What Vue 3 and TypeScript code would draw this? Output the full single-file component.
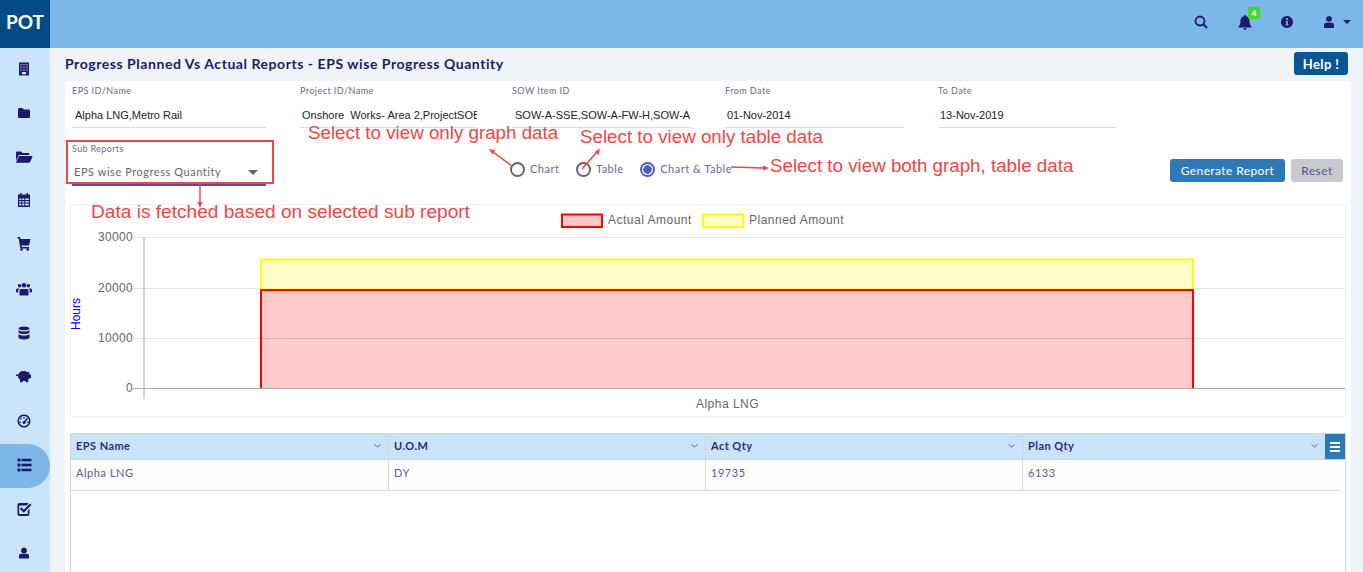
<script setup lang="ts">
const navIcons: string[] = [
  'M4 1.500h10v13H4zM5.500 3v1.200h1.200V3zM8.400 3v1.200h1.200V3zM11.300 3v1.200h1.200V3zM5.500 5.600v1.200h1.200V5.600zM8.400 5.600v1.200h1.200V5.600zM11.300 5.600v1.200h1.200V5.600zM5.500 8.200v1.200h1.200V8.200zM8.400 8.200v1.200h1.200V8.200zM11.300 8.200v1.200h1.200V8.200zM7 11v2.200h4V11z',
  'M3 4.200Q3 3 4.200 3h3L9 4.600h4.800Q15 4.600 15 5.800v6Q15 13 13.800 13H4.200Q3 13 3 11.800z',
  'M1 3.500Q1 2.500 2 2.500h4l1.700 1.600h5.600q1 0 1 1v1H4.600Q3.800 6.100 3.400 7L1 11.500zM4.600 7.100H17q.8 0 .4.900l-2.300 5q-.4.700-1.200.7H1.600q-.8 0-.4-.8l2.400-5q.4-.8 1-.8z',
  'M5 0h1.600v1.600h4.800V0H13v1.600h2V14H3V1.600h2zM4.300 5.500V7h2V5.500zM7.300 5.500V7h2V5.500zM10.300 5.500V7h3.400V5.500zM4.300 8v1.500h2V8zM7.300 8v1.500h2V8zM10.300 8v1.500h3.400V8zM4.300 10.500v2h2v-2zM7.300 10.500v2h2v-2zM10.300 10.500v2h3.400v-2z',
  'M2.500 0H5L5.500 2H15.500L14 8.500H6.500L6.800 10H14V11.500H5.300L3.700 1.500H2.500zM6.500 11.200a1.300 1.300 0 1 0 .01 0zM12.800 11.200a1.300 1.300 0 1 0 .01 0z',
  'M9 2a2.300 2.300 0 1 1-.01 0zM4.600 3a1.700 1.700 0 1 1-.01 0zM13.400 3a1.700 1.700 0 1 1-.01 0zM6 8h6q1.500 0 1.500 2v4.500h-9V10q0-2 1.500-2zM2 7.500h2.500Q3.200 8.500 3.200 10.500v1H2q-1 0-1-1V9q0-1.500 1-1.500zM13.500 7.500H16q1 0 1 1.500v1.500q0 1-1 1h-1.200v-1q0-2-1.300-3z',
  'M9 1.500c3 0 5.500.8 5.500 1.900S12 5.300 9 5.300 3.500 4.500 3.500 3.400 6 1.500 9 1.500zM3.500 5c1 1 3.200 1.500 5.500 1.500S13.500 6 14.500 5v2.300c0 1-2.500 1.800-5.500 1.800S3.500 8.300 3.500 7.300zM3.500 9c1 1 3.200 1.500 5.500 1.500S13.500 10 14.500 9v3.500c0 1-2.500 2-5.500 2s-5.500-1-5.500-2z',
  'M8 2c2 0 3.500.4 4.300 1.200l2-.7v2.400l1.700 1v3l-1.800.6-1 1.300v2.400h-2.500v-1.300H7.500v1.300H5v-2.700C3.500 9.500 3 8.200 3 6.900H1V5.500h2.300C4 3.500 5.800 2 8 2z',
  'M9 1.500a6.500 6.500 0 1 1-.01 0zM9 3a5 5 0 1 0 .01 0zM8.300 4h1.400v1.400H8.300zM5 5.800l1-1 1 1-1 1zM12 4.800l1 1-2.500 3.200a1.500 1.500 0 1 1-1.300-.9zM4.400 8.500h1.400v1.400H4.400zM12.200 8.500h1.400v1.400h-1.400z',
  'M2.500 1.500h3v3h-3zM6.500 1.700h10v2.600h-10zM2.500 6.500h3v3h-3zM6.500 6.700h10v2.600h-10zM2.500 11.500h3v3h-3zM6.500 11.700h10v2.600h-10z',
  'M4.500 2H13v1.300l-1.300 1.200H4.800q-.6 0-.6.6v7.400q0 .6.6.6h7.400q.6 0 .6-.6V9.500l1.700-1.500v4.500Q14.500 15 12.500 15h-8q-2 0-2-2V4q0-2 2-2zM15 2.500L16.500 4l-7.700 7.700-4-4 1.500-1.500 2.500 2.500z',
  'M9 2.500a3 3 0 1 1-.01 0zM5.800 8.700h6.400q1.800 0 1.800 2.300v2.500H4V11q0-2.300 1.800-2.300z'
]
const fields = [
  { label: 'EPS ID/Name', value: 'Alpha LNG,Metro Rail', w: 'w194 pad3' },
  { label: 'Project ID/Name', value: 'Onshore  Works- Area 2,ProjectSOBE,Project', w: 'w177' },
  { label: 'SOW Item ID', value: 'SOW-A-SSE,SOW-A-FW-H,SOW-A', w: 'w179 pad3' },
  { label: 'From Date', value: '01-Nov-2014', w: 'w179' },
  { label: 'To Date', value: '13-Nov-2019', w: 'w178' }
]
const radios = [
  { label: 'Chart', on: false },
  { label: 'Table', on: false },
  { label: 'Chart & Table', on: true }
]
const columns = [
  { name: 'EPS Name', value: 'Alpha LNG' },
  { name: 'U.O.M', value: 'DY' },
  { name: 'Act Qty', value: '19735' },
  { name: 'Plan Qty', value: '6133' }
]
const ticks = [
  { y: 237, label: '30000' },
  { y: 288, label: '20000' },
  { y: 338, label: '10000' },
  { y: 388, label: '0' }
]
</script>

<template>
  <div class="app">
    <header class="topbar">
      <div class="logo">POT</div>
      <div class="top-actions">
        <svg class="ti s1" width="14" height="14" viewBox="0 0 14 14"><circle cx="6" cy="6" r="4.500" fill="none" stroke="#1b1a6b" stroke-width="1.800"/><path d="M9.300 9.300L13 13" stroke="#1b1a6b" stroke-width="2.200"/></svg>
        <div class="bell">
          <svg width="14" height="15" viewBox="0 0 14 15"><path fill="#1b1a6b" d="M7 0q1 0 1 1.200C10.500 1.700 11.500 3.500 11.500 6c0 3 1 4.500 2 5.500v1H.5v-1c1-1 2-2.500 2-5.500 0-2.500 1-4.300 3.500-4.800Q6 0 7 0zM5.200 13.300h3.600Q8.500 15 7 15t-1.800-1.700z"/></svg>
          <span class="badge">4</span>
        </div>
        <svg class="ti s3" width="12" height="12" viewBox="0 0 12 12"><path fill="#1b1a6b" fill-rule="evenodd" d="M6 0a6 6 0 1 1-.01 0zM5 2.200V4h2V2.200zM4.500 5v1h.7v2.500h-.7v1h3v-1h-.7V5z"/></svg>
        <svg class="ti s4" width="12" height="12" viewBox="0 0 12 12"><path fill="#1b1a6b" d="M6 0a3 3 0 1 1-.01 0zM3 6.800h6q2 0 2 2.400V12H1V9.200q0-2.400 2-2.400z"/></svg>
        <span class="caret-top"></span>
      </div>
    </header>
    <div class="body">
      <nav class="sidebar">
        <div v-for="(d, i) in navIcons" :key="i" class="nav-item" :class="{ active: i === 9 }">
          <svg width="18" height="16" viewBox="0 0 18 16"><path fill="#1b1a6b" fill-rule="evenodd" :d="d"/></svg>
        </div>
      </nav>
      <main class="main">
        <div class="title-row">
          <h1>Progress Planned Vs Actual Reports - EPS wise Progress Quantity</h1>
          <button class="help">Help !</button>
        </div>
        <section class="card">
          <div class="fields">
            <div v-for="f in fields" :key="f.label" class="field" :class="f.w">
              <label>{{ f.label }}</label>
              <div class="value">{{ f.value }}</div>
            </div>
          </div>
          <div class="controls">
            <div class="sub">
              <label class="sub-label">Sub Reports</label>
              <div class="sub-value">EPS wise Progress Quantity<span class="caret"></span></div>
            </div>
            <div class="radios">
              <div v-for="r in radios" :key="r.label" class="radio" :class="{ on: r.on }">
                <span class="dot"></span>{{ r.label }}
              </div>
            </div>
            <div class="buttons">
              <button class="gen">Generate Report</button>
              <button class="reset">Reset</button>
            </div>
          </div>
          <div class="chart">
            <svg class="chart-svg" width="1276" height="213" viewBox="70 204 1276 213">
              <rect x="562" y="214.500" width="40" height="12.500" fill="#ffcaca" stroke="#f00" stroke-width="2"/>
              <text x="608" y="224" class="leg">Actual Amount</text>
              <rect x="703" y="214.500" width="40" height="12.500" fill="#ffffc8" stroke="#ff0" stroke-width="2"/>
              <text x="749" y="224" class="leg">Planned Amount</text>
              <line v-for="t in ticks" :key="t.y" x1="133" x2="1346" :y1="t.y + 0.5" :y2="t.y + 0.5" :stroke="t.y === 388 ? '#a8a8a8' : '#e4e4e4'"/>
              <line x1="144" x2="144" y1="237" y2="399" stroke="#c4c4c4" stroke-width="1.500"/>
              <text v-for="t in ticks" :key="t.label" x="133" :y="t.y + 4" class="tick">{{ t.label }}</text>
              <rect x="261" y="259.500" width="932" height="30" fill="#ffffc8" stroke="#ff0" stroke-width="2"/>
              <rect x="261" y="290" width="932" height="98" fill="#ffcaca"/>
              <path d="M261 388V290H1193V388" fill="none" stroke="#f00" stroke-width="2"/>
              <line x1="262" x2="1192" y1="338.500" y2="338.500" stroke="#d8b0b0"/>
              <line x1="133" x2="1346" y1="388.500" y2="388.500" stroke="#a8a8a8"/>
              <text x="727.500" y="408" class="xlab">Alpha LNG</text>
              <text transform="translate(80 314) rotate(-90)" class="hours">Hours</text>
            </svg>
          </div>
          <div class="grid">
            <div class="grid-head">
              <div v-for="c in columns" :key="c.name" class="th">
                <span>{{ c.name }}</span>
                <svg width="7" height="4" viewBox="0 0 7 4"><path d="M.5.500L3.500 3 6.500.5" fill="none" stroke="#5a6aa0"/></svg>
              </div>
              <div class="menu"><span></span><span></span><span></span></div>
            </div>
            <div class="grid-row">
              <div v-for="c in columns" :key="c.name" class="td">{{ c.value }}</div>
            </div>
          </div>
        </section>
      </main>
    </div>
    <svg class="marks" width="1363" height="572" viewBox="0 0 1363 572">
      <rect x="67" y="141" width="206" height="42" fill="none" stroke="#f44347" stroke-width="2"/>
      <g stroke="#f44347" stroke-width="1.500" fill="#f44347">
        <line x1="512" y1="166" x2="493" y2="152"/>
        <path d="M489 149l6.500 1.200-3 4z" stroke="none"/>
        <line x1="582" y1="169" x2="597" y2="152"/>
        <path d="M600 148.500l-1.500 6.500-3.700-3.200z" stroke="none"/>
        <line x1="731" y1="167" x2="763" y2="168"/>
        <path d="M769 168l-6 2.500v-5z" stroke="none"/>
        <line x1="200" y1="184" x2="200" y2="203"/>
        <path d="M200 208l-2.500-6h5z" stroke="none"/>
      </g>
    </svg>
    <span class="note n1">Select to view only graph data</span>
    <span class="note n2">Select to view only table data</span>
    <span class="note n3">Select to view both graph, table data</span>
    <span class="note n4">Data is fetched based on selected sub report</span>
  </div>
</template>

<style>
html, body { margin: 0; height: 572px; overflow: hidden; background: #fff; }
</style>

<style scoped>
.app { position: relative; width: 1363px; height: 572px; overflow: hidden; display: flex; flex-direction: column; font-family: Lato, "Liberation Sans", sans-serif; }
.topbar { height: 48px; flex: none; display: flex; background: #7db7e8; }
.logo { width: 50px; background: #034b85; color: #fff; font: 700 19px/44px Lato, sans-serif; text-align: center; }
.top-actions { flex: 1; display: flex; align-items: center; padding-bottom: 4px; box-sizing: border-box; padding-left: 1144px; }
.s1 { margin-right: 30px; }
.bell { position: relative; display: flex; margin-right: 29px; }
.badge { position: absolute; left: 10px; top: -8px; width: 12px; height: 12px; background: #3fdc1e; border-radius: 2px; color: #fff; font: 700 9px/12px "Liberation Sans", sans-serif; text-align: center; }
.s3 { margin-right: 30px; }
.s4 { margin-right: 8px; }
.caret-top { width: 0; height: 0; border: 4px solid transparent; border-top: 4px solid #1b1a6b; border-bottom: 0; }
.body { flex: 1; display: flex; min-height: 0; }
.sidebar { width: 50px; flex: none; background: #cae5f9; }
.nav-item { height: 44px; box-sizing: border-box; padding: 0 0 3px 15px; display: flex; align-items: center; }
.nav-item.active { background: #7db7e8; border-radius: 0 22px 22px 0; }
.main { flex: 1; background: #eef4f8; padding: 0 12px 0 15px; min-width: 0; }
.title-row { height: 33px; display: flex; align-items: center; justify-content: space-between; }
h1 { margin: 0 0 3px; font: 700 14px Lato, sans-serif; letter-spacing: .55px; color: #1b1a6b; }
.help { width: 54px; height: 23px; margin: 0 3px 0 0; border: 0; border-radius: 3px; background: #0c5592; color: #fff; font: 700 13px Lato, sans-serif; letter-spacing: .4px; padding: 0; position: relative; top: -1px; }
.card { background: #fff; border-radius: 4px; height: 500px; padding: 4px 5px 0 5px; box-sizing: border-box; }
.fields { display: flex; gap: 34px; margin-left: 2px; }
.w194 { width: 194px; }
.w177 { width: 177px; margin-right: 1px; }
.w178 { width: 178px; }
.w179 { width: 179px; }
.field { height: 42px; border-bottom: 1px solid #ddd; box-sizing: content-box; }
label { display: block; padding-top: 1px; font: 400 9px/10px Lato, sans-serif; letter-spacing: .45px; color: #66669c; }
.sub-label { letter-spacing: .35px; padding-top: 0; }
.value { margin-top: 13px; padding-left: 2px; font: 400 11px/12px "Liberation Sans", sans-serif; color: #222; white-space: pre; overflow: hidden; }
.pad3 .value { padding-left: 3px; }
.controls { display: flex; margin-top: 13px; height: 45px; position: relative; }
.sub { width: 194px; margin-left: 2px; height: 45px; box-sizing: border-box; border-bottom: 2px solid #4b4fb0; padding-top: 3px; }
.sub-value { display: flex; justify-content: space-between; align-items: center; margin-top: 11px; padding: 0 8px 0 2px; font: 400 11px/14px Lato, sans-serif; letter-spacing: .55px; color: #666; }
.caret { width: 0; height: 0; border: 5px solid transparent; border-top: 5px solid #666; border-bottom: 0; }
.radios { display: flex; margin-left: 244px; padding-top: 21px; }
.radio { display: flex; align-items: center; height: 14px; margin-right: 16.500px; font: 400 11px/14px Lato, sans-serif; letter-spacing: .5px; color: #6868a0; }
.dot { width: 15px; height: 15px; box-sizing: border-box; border: 2px solid #666; border-radius: 50%; margin-right: 5px; }
.radio.on .dot { border-color: #4f5cc0; background: radial-gradient(circle, #4f5cc0 0 4px, #fff 4.500px); }
.buttons { margin-left: auto; margin-right: 3px; padding-top: 18px; display: flex; gap: 6px; }
button { font-family: Lato, sans-serif; }
.gen, .reset { height: 23px; border: 0; border-radius: 3px; padding: 0; font: 400 12px Lato, sans-serif; letter-spacing: .4px; }
.gen { width: 115px; background: #2e79b5; color: #fff; }
.reset { width: 52px; background: #c8cad0; color: #55558a; }
.chart { margin-top: 18px; width: 1276px; height: 213px; box-sizing: border-box; outline: 1px solid #f0f0f0; outline-offset: -1px; }
.chart-svg { display: block; }
.leg { font: 400 12px "Liberation Sans", sans-serif; letter-spacing: .5px; fill: #666; }
.tick { font: 400 12px "Liberation Sans", sans-serif; letter-spacing: .35px; fill: #666; text-anchor: end; }
.xlab { font: 400 12px "Liberation Sans", sans-serif; letter-spacing: .5px; fill: #666; text-anchor: middle; }
.hours { font: 400 12px "Liberation Sans", sans-serif; fill: #00f; text-anchor: middle; }
.grid { margin-top: 16px; width: 1276px; height: 200px; box-sizing: border-box; border: 1px solid #d4d4d4; border-bottom: 0; }
.grid-head { display: grid; grid-template-columns: 318px 317px 317px 302px 20px; height: 25px; background: #c9e4f8; border-bottom: 1px solid #cfd4d8; box-sizing: content-box; }
.th { display: flex; justify-content: space-between; align-items: center; padding: 0 7px 2px 5px; border-right: 1px solid #d8d8d8; font: 700 11px Lato, sans-serif; letter-spacing: .45px; color: #2b2a80; }
.th:nth-child(4) { border-right: 0; }
.menu { background: #2e79b5; display: flex; flex-direction: column; justify-content: center; align-items: center; gap: 2px; }
.menu span { width: 10px; height: 2px; background: #fff; }
.grid-row { display: grid; grid-template-columns: 318px 317px 317px 302px; width: 1269px; height: 30px; border-bottom: 1px solid #d8d8d8; background: #fdfdfd; }
.td { padding: 6px 5px 0; border-right: 1px solid #d8d8d8; font: 400 11px/13px Lato, sans-serif; letter-spacing: .55px; color: #5a5a9c; }
.td:last-child { border-right: 0; }
.marks { position: absolute; left: 0; top: 0; pointer-events: none; }
.note { position: absolute; font: 400 18.750px/20px "Liberation Sans", sans-serif; color: #f44347; white-space: nowrap; }
.n1 { left: 308px; top: 123px; }
.n2 { left: 580px; top: 127px; }
.n3 { left: 770px; top: 156px; }
.n4 { left: 91px; top: 202px; font-size: 19.100px; }
</style>
